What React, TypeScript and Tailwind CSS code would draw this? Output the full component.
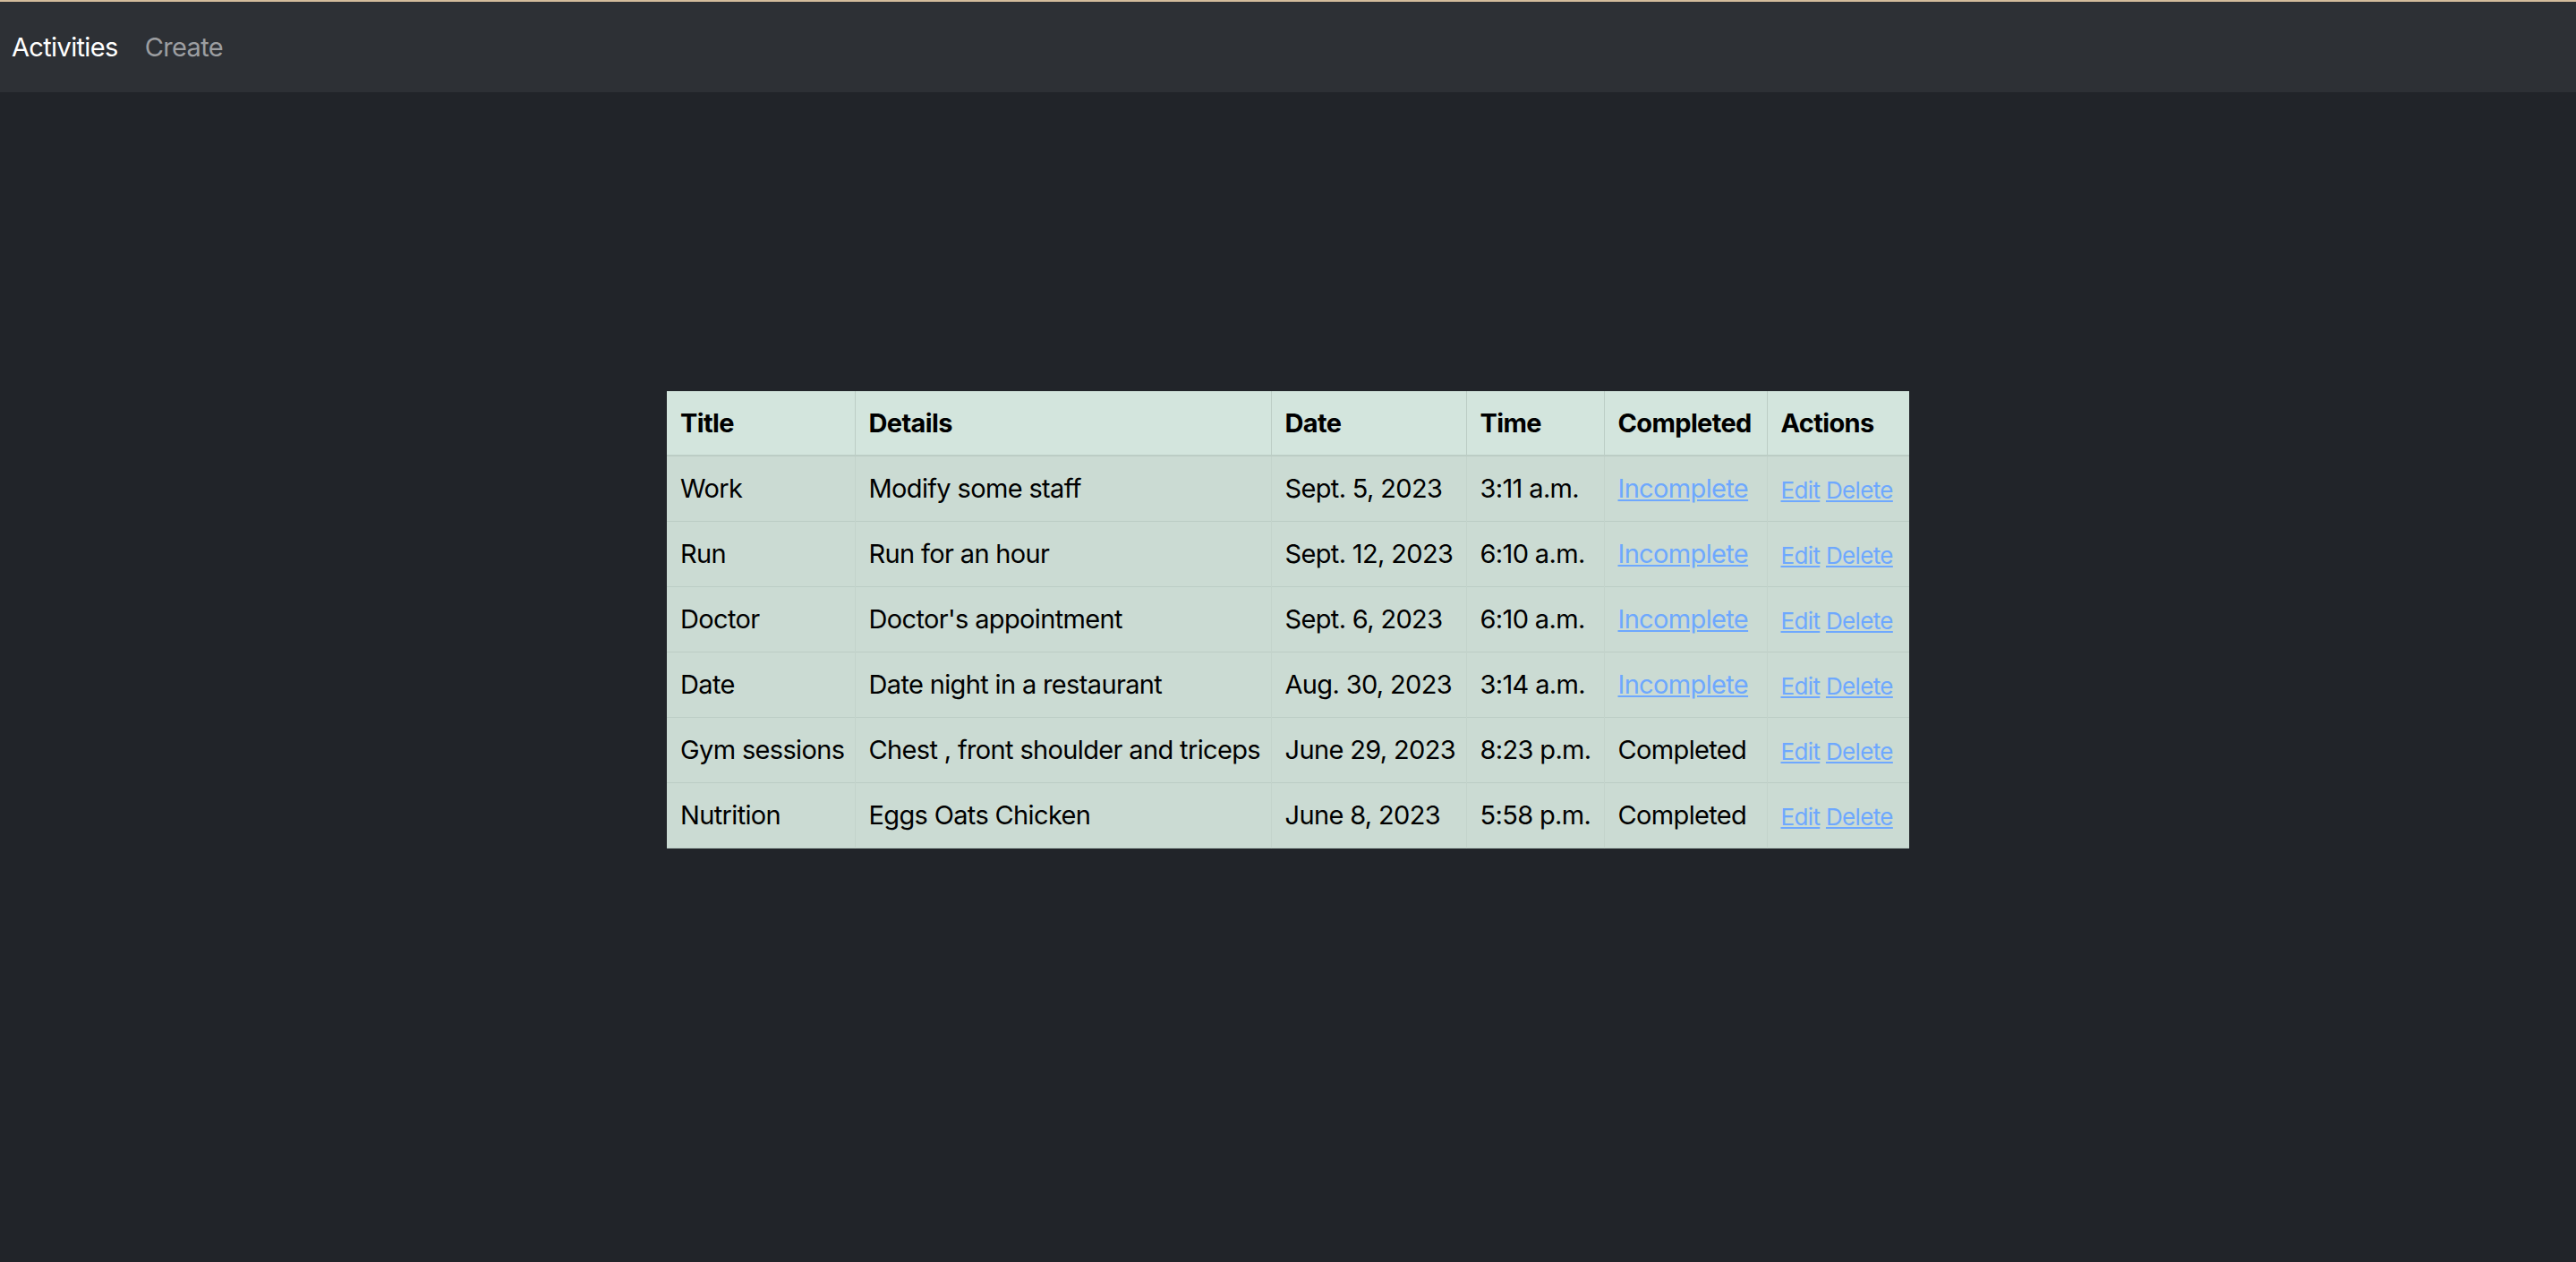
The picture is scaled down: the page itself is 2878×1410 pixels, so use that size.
const rows = [
  { title: "Work", details: "Modify some staff", date: "Sept. 5, 2023", time: "3:11 a.m.", done: false },
  { title: "Run", details: "Run for an hour", date: "Sept. 12, 2023", time: "6:10 a.m.", done: false },
  { title: "Doctor", details: "Doctor's appointment", date: "Sept. 6, 2023", time: "6:10 a.m.", done: false },
  { title: "Date", details: "Date night in a restaurant", date: "Aug. 30, 2023", time: "3:14 a.m.", done: false },
  { title: "Gym sessions", details: "Chest , front shoulder and triceps", date: "June 29, 2023", time: "8:23 p.m.", done: true },
  { title: "Nutrition", details: "Eggs Oats Chicken", date: "June 8, 2023", time: "5:58 p.m.", done: true },
];

export default function App() {
  return (
    <div className="min-h-screen bg-[#212429] font-['Inter',sans-serif] text-[29px] tracking-[-0.65px]">
      <nav className="h-[103px] border-t-2 border-[#d3bc9c] bg-[#2d3035] flex items-center px-[13px] gap-[30px]">
        <a className="text-white">Activities</a>
        <a className="text-[#9c9ea1]">Create</a>
      </nav>

      <div className="pt-[334px] flex justify-center">
        <table className="table-fixed border-collapse w-[1388px] text-black leading-[1.5]">
          <thead>
            <tr className="h-[72px] bg-[#d3e5dd] border-b-2 border-[#bccdc5]">
              <th className="w-[210px] text-left font-bold px-[15px] border-r border-[#bccdc5]">Title</th>
              <th className="w-[465px] text-left font-bold px-[15px] border-r border-[#bccdc5]">Details</th>
              <th className="w-[218px] text-left font-bold px-[15px] border-r border-[#bccdc5]">Date</th>
              <th className="w-[154px] text-left font-bold px-[15px] border-r border-[#bccdc5]">Time</th>
              <th className="w-[182px] text-left font-bold px-[15px] border-r border-[#bccdc5]">Completed</th>
              <th className="w-[159px] text-left font-bold px-[15px]">Actions</th>
            </tr>
          </thead>
          <tbody>
            {rows.map((r, i) => (
              <tr key={i} className="h-[73px] bg-[#cbdbd3] border-b border-[#bccdc5]">
                <td className="px-[15px] border-r border-[#c3d3cb] whitespace-nowrap">{r.title}</td>
                <td className="px-[15px] border-r border-[#c3d3cb] whitespace-nowrap">{r.details}</td>
                <td className="px-[15px] border-r border-[#c3d3cb] whitespace-nowrap">{r.date}</td>
                <td className="px-[15px] border-r border-[#c3d3cb] whitespace-nowrap">{r.time}</td>
                <td className="px-[15px] border-r border-[#c3d3cb] whitespace-nowrap">
                  {r.done ? (
                    "Completed"
                  ) : (
                    <a className="text-[#6ea8fe] underline">Incomplete</a>
                  )}
                </td>
                <td className="px-[15px] whitespace-nowrap text-[26px] pt-[4px]">
                  <a className="text-[#6ea8fe] underline">Edit</a>{" "}
                  <a className="text-[#6ea8fe] underline">Delete</a>
                </td>
              </tr>
            ))}
          </tbody>
        </table>
      </div>
    </div>
  );
}
